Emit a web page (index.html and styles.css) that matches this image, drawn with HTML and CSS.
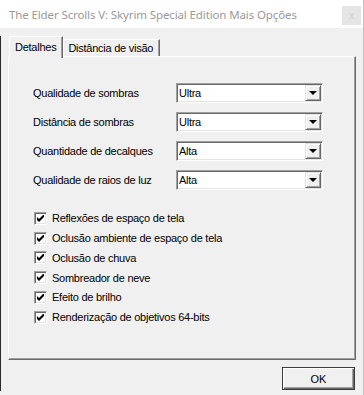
FILE: index.html
```html
<!DOCTYPE html>
<html lang="pt">
<head>
    <meta charset="UTF-8">
    <meta name="viewport" content="width=device-width, initial-scale=1.0">
    <title>Mais Opções</title>
    <link rel="stylesheet" href="styles.css">
</head>
<body>

    <!-- Title bar -->
    <div class="titlebar">
        <span class="title">The Elder Scrolls V: Skyrim Special Edition Mais Opções</span>
        <span class="close">x</span>
    </div>

    <div class="client">
        <!-- Tabs -->
        <div class="tabs">
            <div class="tab active">Detalhes</div>
            <div class="tab">Distância de visão</div>
        </div>

        <div class="panel">
            <div class="settings">
                <div class="setting">
                    <span class="setting-label">Qualidade de sombras</span>
                    <div class="combo"><span class="combo-value">Ultra</span><span class="combo-btn"><i class="arrow"></i></span></div>
                </div>
                <div class="setting">
                    <span class="setting-label">Distância de sombras</span>
                    <div class="combo"><span class="combo-value">Ultra</span><span class="combo-btn"><i class="arrow"></i></span></div>
                </div>
                <div class="setting">
                    <span class="setting-label">Quantidade de decalques</span>
                    <div class="combo"><span class="combo-value">Alta</span><span class="combo-btn"><i class="arrow"></i></span></div>
                </div>
                <div class="setting">
                    <span class="setting-label">Qualidade de raios de luz</span>
                    <div class="combo"><span class="combo-value">Alta</span><span class="combo-btn"><i class="arrow"></i></span></div>
                </div>
            </div>

            <div class="checks">
                <div class="check"><span class="box"><svg width="7" height="7" viewBox="0 0 7 7"><polygon points="0,2 2,4 7,-1 7,2 2,7 0,5"/></svg></span>Reflexões de espaço de tela</div>
                <div class="check"><span class="box"><svg width="7" height="7" viewBox="0 0 7 7"><polygon points="0,2 2,4 7,-1 7,2 2,7 0,5"/></svg></span>Oclusão ambiente de espaço de tela</div>
                <div class="check"><span class="box"><svg width="7" height="7" viewBox="0 0 7 7"><polygon points="0,2 2,4 7,-1 7,2 2,7 0,5"/></svg></span>Oclusão de chuva</div>
                <div class="check"><span class="box"><svg width="7" height="7" viewBox="0 0 7 7"><polygon points="0,2 2,4 7,-1 7,2 2,7 0,5"/></svg></span>Sombreador de neve</div>
                <div class="check"><span class="box"><svg width="7" height="7" viewBox="0 0 7 7"><polygon points="0,2 2,4 7,-1 7,2 2,7 0,5"/></svg></span>Efeito de brilho</div>
                <div class="check"><span class="box"><svg width="7" height="7" viewBox="0 0 7 7"><polygon points="0,2 2,4 7,-1 7,2 2,7 0,5"/></svg></span>Renderização de objetivos 64-bits</div>
            </div>
        </div>

        <div class="footer">
            <button class="btn-ok">OK</button>
        </div>
    </div>

</body>
</html>
```

FILE: styles.css
```css
body {
    margin: 0;
    width: 363px;
    height: 395px;
    overflow: hidden;
    border-right: 1px solid #c4c4c4;
    background: #f0f0f0;
    font-family: "Liberation Sans", Arial, sans-serif;
    font-size: 11px;
    letter-spacing: -0.25px;
    color: #000;
}

/* title bar */
.titlebar {
    height: 28px;
    display: flex;
    align-items: center;
    padding-left: 9px;
    background: #fff;
}
.title {
    font-family: "Noto Sans", sans-serif;
    font-size: 11.5px;
    letter-spacing: -0.12px;
    color: #999;
}
.close {
    margin: 6px 2px 0 auto;
    align-self: flex-start;
    width: 19px;
    height: 19px;
    background: #e5e5e5;
    color: #cfcfcf;
    font-size: 10px;
    display: flex;
    align-items: center;
    justify-content: center;
}

.client {
    height: 367px;
    background: linear-gradient(#2b2b2b, #2b2b2b) 0 0 / 1px 355px no-repeat, #f0f0f0;
}

/* tabs */
.tabs {
    display: flex;
    align-items: flex-end;
    height: 20px;
    margin-top: 8px;
    padding-left: 9px;
}
.tab {
    height: 17px;
    padding: 0 6px 0 4px;
    display: flex;
    align-items: center;
    border: 1px solid;
    border-color: #fff #696969 transparent #fff;
    border-bottom: none;
    box-shadow: inset -1px 0 #a0a0a0;
    box-sizing: border-box;
    background: #f0f0f0;
}
.tab.active {
    height: 22px;
    margin-bottom: -2px;
    padding: 0 6px 2px 5px;
    position: relative;
    z-index: 1;
}

/* panel */
.panel {
    width: 348px;
    height: 304px;
    box-sizing: border-box;
    margin-left: 8px;
    padding: 26px 0 0 24px;
    border: 1px solid;
    border-color: #fff #696969 #696969 #fff;
    box-shadow: inset -1px -1px #a0a0a0;
}

.settings { display: flex; flex-direction: column; gap: 9px; }
.setting { display: flex; align-items: center; height: 20px; }
.setting-label { width: 143px; }

.combo {
    width: 147px;
    height: 20px;
    box-sizing: border-box;
    display: flex;
    align-items: center;
    background: #fff;
    border: 1px solid;
    border-color: #a0a0a0 #fff #fff #a0a0a0;
    box-shadow: inset 1px 1px #696969, inset -1px -1px #e3e3e3;
    padding: 1px 1px 1px 2px;
}
.combo-value { flex: 1; }
.combo-btn {
    width: 16px;
    height: 16px;
    box-sizing: border-box;
    display: flex;
    align-items: center;
    justify-content: center;
    background: #f0f0f0;
    border: 1px solid;
    border-color: #e3e3e3 #696969 #696969 #e3e3e3;
    box-shadow: inset 1px 1px #fff, inset -1px -1px #a0a0a0;
}
.arrow {
    width: 0;
    height: 0;
    border-left: 4px solid transparent;
    border-right: 4px solid transparent;
    border-top: 4px solid #000;
}

/* checkboxes */
.checks { margin-top: 18px; display: flex; flex-direction: column; }
.check { display: flex; align-items: center; height: 20px; }
.check:nth-child(n+3) { height: 19.8px; }
.box {
    width: 13px;
    height: 13px;
    box-sizing: border-box;
    margin: 0 5px 0 1px;
    display: flex;
    align-items: center;
    justify-content: center;
    background: #fff;
    border: 1px solid;
    border-color: #a0a0a0 #fff #fff #a0a0a0;
    box-shadow: inset 1px 1px #696969, inset -1px -1px #e3e3e3;
}

/* footer */
.footer {
    display: flex;
    justify-content: flex-end;
    padding: 7px 8px 0 0;
}
.btn-ok {
    width: 73px;
    height: 23px;
    font-family: "Liberation Sans", Arial, sans-serif;
    font-size: 11px;
    color: #000;
    background: #f0f0f0;
    border: 1px solid #3c3c3c;
    box-shadow: inset 1px 1px #fff, inset -1px -1px #696969, inset -2px -2px #a0a0a0;
    padding: 0;
}
```
